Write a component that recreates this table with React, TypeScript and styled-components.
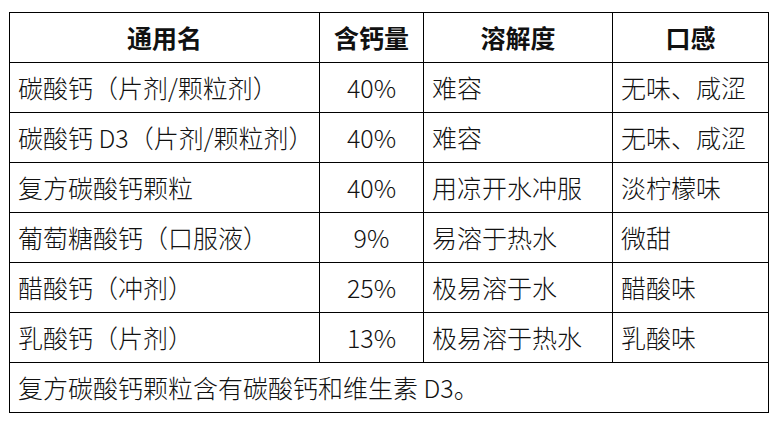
import React from "react";
import styled, { createGlobalStyle } from "styled-components";

const GlobalStyle = createGlobalStyle`
  html, body {
    margin: 0;
    padding: 0;
    background: #ffffff;
  }
  body {
    font-family: "Noto Sans CJK SC", "Noto Sans", sans-serif;
    color: #111111;
  }
`;

const Page = styled.div`
  padding: 12px 0 0 9px;
`;

const Table = styled.table`
  border-collapse: collapse;
  table-layout: fixed;
  width: 759px;
  font-size: 25px;
  line-height: 1;
`;

const Row = styled.tr`
  height: 50px;
`;

const HeadCell = styled.th`
  border: 1px solid #000;
  padding: 0 8px;
  font-weight: 700;
  text-align: center;
`;

const Cell = styled.td<{ $align?: "left" | "center" }>`
  border: 1px solid #000;
  padding: 0 8px;
  font-weight: 300;
  text-align: ${({ $align }) => $align ?? "left"};
  white-space: nowrap;
`;

const NoteCell = styled.td`
  border: 1px solid #000;
  padding: 0 8px;
  font-weight: 300;
  text-align: left;
`;

const ROWS = [
  { name: "碳酸钙（片剂/颗粒剂）", calcium: "40%", solubility: "难容", taste: "无味、咸涩" },
  { name: "碳酸钙 D3（片剂/颗粒剂）", calcium: "40%", solubility: "难容", taste: "无味、咸涩" },
  { name: "复方碳酸钙颗粒", calcium: "40%", solubility: "用凉开水冲服", taste: "淡柠檬味" },
  { name: "葡萄糖酸钙（口服液）", calcium: "9%", solubility: "易溶于热水", taste: "微甜" },
  { name: "醋酸钙（冲剂）", calcium: "25%", solubility: "极易溶于水", taste: "醋酸味" },
  { name: "乳酸钙（片剂）", calcium: "13%", solubility: "极易溶于热水", taste: "乳酸味" },
];

export default function App() {
  return (
    <Page>
      <GlobalStyle />
      <Table>
        <colgroup>
          <col style={{ width: 310 }} />
          <col style={{ width: 104 }} />
          <col style={{ width: 189 }} />
          <col style={{ width: 156 }} />
        </colgroup>
        <thead>
          <Row>
            <HeadCell>通用名</HeadCell>
            <HeadCell>含钙量</HeadCell>
            <HeadCell>溶解度</HeadCell>
            <HeadCell>口感</HeadCell>
          </Row>
        </thead>
        <tbody>
          {ROWS.map((row) => (
            <Row key={row.name}>
              <Cell>{row.name}</Cell>
              <Cell $align="center">{row.calcium}</Cell>
              <Cell>{row.solubility}</Cell>
              <Cell>{row.taste}</Cell>
            </Row>
          ))}
          <Row>
            <NoteCell colSpan={4}>复方碳酸钙颗粒含有碳酸钙和维生素 D3。</NoteCell>
          </Row>
        </tbody>
      </Table>
    </Page>
  );
}
